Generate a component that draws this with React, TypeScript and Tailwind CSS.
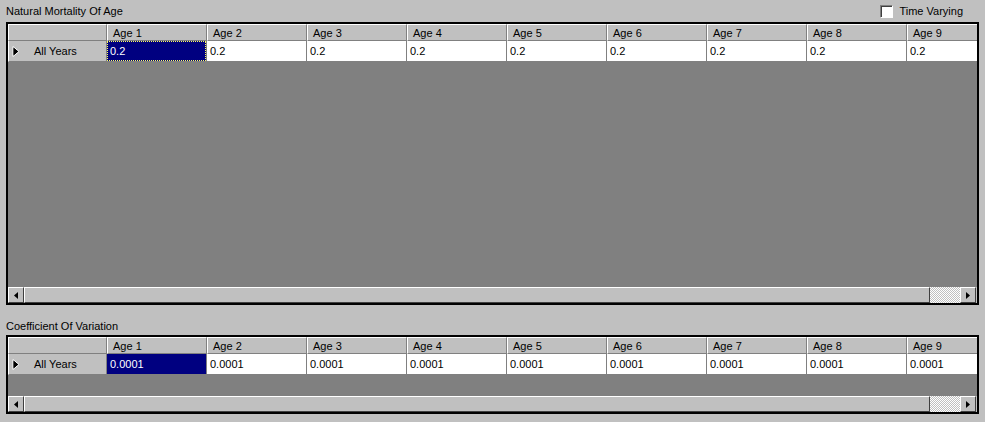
import React from 'react';

const ages = ['Age 1', 'Age 2', 'Age 3', 'Age 4', 'Age 5', 'Age 6', 'Age 7', 'Age 8', 'Age 9'];

function RowArrow() {
  return (
    <svg width="8" height="11" viewBox="0 0 8 11" className="shrink-0">
      <path d="M1 0.5 L7 5.5 L1 10.5 Z" fill="#000" stroke="#fff" strokeWidth="1" />
      <path d="M1.6 2 L5.6 5.5 L1.6 9 Z" fill="#000" />
    </svg>
  );
}

function ScrollButton({ dir }: { dir: 'left' | 'right' }) {
  return (
    <div className="w-[16px] h-[16px] shrink-0 bg-[#c0c0c0] border border-t-white border-l-white border-r-[#404040] border-b-[#404040] flex items-center justify-center">
      <svg width="4" height="7" viewBox="0 0 4 7">
        {dir === 'left' ? <path d="M4 0 L0 3.5 L4 7 Z" fill="#000" /> : <path d="M0 0 L4 3.5 L0 7 Z" fill="#000" />}
      </svg>
    </div>
  );
}

function HScrollBar() {
  return (
    <div className="h-[16px] flex shrink-0">
      <ScrollButton dir="left" />
      <div className="w-[906px] h-[16px] bg-[#c0c0c0] border border-t-white border-l-white border-r-[#404040] border-b-[#404040]" />
      <div className="w-[30px] h-[16px] bg-[repeating-conic-gradient(#c0c0c0_0_25%,#ffffff_0_50%)] bg-[length:2px_2px]" />
      <ScrollButton dir="right" />
    </div>
  );
}

interface GridProps {
  value: string;
  focus?: boolean;
  emptyHeight: string;
}

function Grid({ value, focus, emptyHeight }: GridProps) {
  return (
    <div className="mx-[6px] border-2 border-black flex flex-col overflow-hidden">
      {/* Column headers */}
      <div className="h-[17px] flex shrink-0 bg-[#c0c0c0]">
        <div className="w-[99px] shrink-0 border-r border-b border-[#808080] border-t border-t-white border-l border-l-white" />
        {ages.map((a) => (
          <div
            key={a}
            className="w-[100px] shrink-0 border-r border-b border-[#808080] border-l border-l-white border-t border-t-white pl-[5px] pt-[1px] flex items-center"
          >
            {a}
          </div>
        ))}
      </div>
      {/* Data row */}
      <div className="h-[21px] flex shrink-0">
        <div className="w-[99px] shrink-0 bg-[#c0c0c0] border-r border-b border-[#808080] border-l border-l-white flex items-center pl-[3px]">
          <RowArrow />
          <span className="ml-[14px] pt-[1px]">All Years</span>
        </div>
        {ages.map((a, i) =>
          i === 0 ? (
            <div key={a} className="w-[100px] shrink-0 bg-[#000080] text-white border-r border-b border-[#808080] flex">
              <div
                className={`flex-1 flex items-center pl-[2px] pt-[1px] border border-dotted ${focus ? 'border-[#ffff60]' : 'border-transparent'}`}
              >
                {value}
              </div>
            </div>
          ) : (
            <div key={a} className="w-[100px] shrink-0 bg-white border-r border-b border-[#808080] flex items-center pl-[3px] pt-[1px]">
              {value}
            </div>
          )
        )}
      </div>
      <div className={`${emptyHeight} bg-[#808080] shrink-0`} />
      <HScrollBar />
    </div>
  );
}

export default function App() {
  return (
    <div className="w-[985px] h-[422px] bg-[#c0c0c0] text-black text-[11px] leading-[13px] font-['Liberation_Sans',Arial,sans-serif] overflow-hidden">
      <div className="h-[22px] flex items-center justify-between pl-[6px] pr-[22px] pt-[1px]">
        <span>Natural Mortality Of Age</span>
        <label className="flex items-center gap-[6px]">
          <span className="w-[13px] h-[13px] bg-white border border-t-[#808080] border-l-[#808080] border-r-white border-b-white shadow-[inset_1px_1px_0_#404040]" />
          <span>Time Varying</span>
        </label>
      </div>
      <Grid value="0.2" focus emptyHeight="h-[225px]" />
      <div className="h-[30px] pt-[15px] pl-[6px]">Coefficient Of Variation</div>
      <Grid value="0.0001" emptyHeight="h-[21px]" />
    </div>
  );
}
